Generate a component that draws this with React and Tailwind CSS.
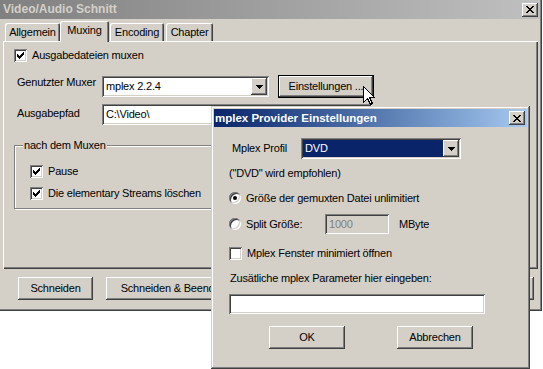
import React from "react";

const raised =
  "shadow-[inset_-1px_-1px_#404040,inset_1px_1px_#ffffff,inset_-2px_-2px_#808080,inset_2px_2px_#d4d0c8]";
const sunken =
  "shadow-[inset_1px_1px_#808080,inset_-1px_-1px_#ffffff,inset_2px_2px_#404040,inset_-2px_-2px_#d4d0c8]";

function CloseBtn() {
  return (
    <div className={`w-[16px] h-[14px] bg-[#d4d0c8] ${raised} flex items-center justify-center`}>
      <svg width="8" height="7" viewBox="0 0 8 7" shapeRendering="crispEdges">
        <path
          fill="#000"
          d="M0 0h2v1h-2z M6 0h2v1h-2z M1 1h2v1h-2z M5 1h2v1h-2z M2 2h4v1h-4z M3 3h2v1h-2z M2 4h4v1h-4z M1 5h2v1h-2z M5 5h2v1h-2z M0 6h2v1h-2z M6 6h2v1h-2z"
        />
      </svg>
    </div>
  );
}

function Arrow() {
  return (
    <svg width="7" height="4" viewBox="0 0 7 4" shapeRendering="crispEdges">
      <path fill="#000" d="M0 0h7v1h-7z M1 1h5v1h-5z M2 2h3v1h-3z M3 3h1v1h-1z" />
    </svg>
  );
}

function Check({ checked }) {
  return (
    <div className={`w-[13px] h-[13px] shrink-0 bg-white ${sunken}`}>
      {checked && (
        <svg width="13" height="13" viewBox="0 0 13 13" shapeRendering="crispEdges">
          <path
            fill="#000"
            d="M3 5h1v3h-1z M4 6h1v3h-1z M5 7h1v3h-1z M6 6h1v3h-1z M7 5h1v3h-1z M8 4h1v3h-1z M9 3h1v3h-1z"
          />
        </svg>
      )}
    </div>
  );
}

function Radio({ checked }) {
  return (
    <div
      className={`w-[12px] h-[12px] shrink-0 rounded-full bg-white ${sunken} flex items-center justify-center`}
    >
      {checked && <div className="w-[4px] h-[4px] rounded-full bg-black" />}
    </div>
  );
}

function Button({ children, className = "" }) {
  return (
    <div
      className={`h-[23px] bg-[#d4d0c8] ${raised} flex items-center justify-center shrink-0 ${className}`}
    >
      {children}
    </div>
  );
}

export default function App() {
  return (
    <div className="relative w-[543px] h-[369px] bg-white overflow-hidden font-['Liberation_Sans',Arial,sans-serif] text-[11px] leading-[13px] tracking-[-0.2px] text-black">
      {/* Main window */}
      <div className="w-[542px] h-[311px] bg-[#d4d0c8] pr-[2px] pb-[2px] shadow-[inset_-1px_-1px_#404040,inset_-2px_-2px_#808080] flex flex-col">
        {/* title */}
        <div className="h-[19px] w-[540px] bg-gradient-to-r from-[#808080] to-[#c0c0c0] flex items-center pl-[3px] pr-[2px]">
          <span className="font-bold text-[12px] tracking-normal text-[#d4d0c8] flex-1">Video/Audio Schnitt</span>
          <CloseBtn />
        </div>
        {/* tabs */}
        <div className="mt-[2px] h-[20px] flex items-start ml-[5px]">
          <div className="mt-[2px] h-[18px] w-[55px] rounded-t-[2px] shadow-[inset_1px_1px_#ffffff,inset_-1px_0_#404040,inset_-2px_0_#808080] flex items-center justify-center">
            Allgemein
          </div>
          <div className="relative z-10 h-[21px] w-[49px] bg-[#d4d0c8] rounded-t-[2px] shadow-[inset_1px_1px_#ffffff,inset_-1px_0_#404040,inset_-2px_0_#808080] flex items-start justify-center pt-[3px]">
            Muxing
          </div>
          <div className="ml-[1px] mt-[2px] h-[18px] w-[54px] rounded-t-[2px] shadow-[inset_1px_1px_#ffffff,inset_-1px_0_#404040,inset_-2px_0_#808080] flex items-center justify-center">
            Encoding
          </div>
          <div className="ml-[2px] mt-[2px] h-[18px] w-[47px] rounded-t-[2px] shadow-[inset_1px_1px_#ffffff,inset_-1px_0_#404040,inset_-2px_0_#808080] flex items-center justify-center">
            Chapter
          </div>
        </div>
        {/* panel */}
        <div className="ml-[3px] w-[535px] h-[228px] shrink-0 shadow-[inset_1px_1px_#ffffff,inset_-1px_-1px_#404040,inset_-2px_-2px_#808080] flex flex-col">
          <div className="mt-[8px] ml-[11px] flex items-center h-[13px]">
            <Check checked />
            <span className="ml-[5px]">Ausgabedateien muxen</span>
          </div>
          <div className="mt-[13px] ml-[14px] flex items-start h-[23px]">
            <span className="w-[85px] shrink-0 mt-[1px]">Genutzter Muxer</span>
            <div className={`mt-[1px] w-[167px] h-[21px] bg-white ${sunken} flex items-center pl-[4px] pr-[2px]`}>
              <span className="flex-1">mplex 2.2.4</span>
              <div className={`w-[16px] h-[17px] bg-[#d4d0c8] ${raised} flex items-center justify-center`}>
                <Arrow />
              </div>
            </div>
            <div className="ml-[9px] w-[96px] h-[23px] border border-black">
              <div className={`w-full h-full bg-[#d4d0c8] ${raised} flex items-center justify-center`}>
                Einstellungen ...
              </div>
            </div>
          </div>
          <div className="mt-[6px] ml-[14px] flex items-start h-[21px]">
            <span className="w-[85px] shrink-0 mt-[3px]">Ausgabepfad</span>
            <div className={`w-[270px] h-[21px] bg-white ${sunken} flex items-center pl-[4px]`}>
              C:\Video\
            </div>
          </div>
          <div className="relative mt-[20px] ml-[11px] w-[505px] h-[64px] border border-[#808080] shadow-[inset_1px_1px_#ffffff,1px_1px_#ffffff] pl-[15px] pt-[19px]">
            <span className="absolute left-[8px] -top-[7px] px-[1px] bg-[#d4d0c8]">nach dem Muxen</span>
            <div className="flex items-center h-[13px]">
              <Check checked />
              <span className="ml-[5px]">Pause</span>
            </div>
            <div className="mt-[9px] flex items-center h-[13px]">
              <Check checked />
              <span className="ml-[5px]">Die elementary Streams löschen</span>
            </div>
          </div>
        </div>
        {/* bottom buttons */}
        <div className="mt-[8px] flex items-center">
          <Button className="ml-[18px] w-[75px]">Schneiden</Button>
          <Button className="ml-[13px] w-[135px]">Schneiden &amp; Beenden</Button>
          <Button className="ml-auto mr-[6px] w-[75px]">Abbrechen</Button>
        </div>
      </div>

      {/* Dialog */}
      <div className="absolute left-[211px] top-[106px] w-[319px] h-[263px] bg-[#d4d0c8] p-[3px] shadow-[inset_-1px_-1px_#404040,inset_1px_1px_#d4d0c8,inset_-2px_-2px_#808080,inset_2px_2px_#ffffff] flex flex-col">
        <div className="h-[18px] shrink-0 bg-gradient-to-r from-[#0a246a] to-[#a6caf0] flex items-center pl-[1px] pr-[2px]">
          <span className="flex-1 font-bold text-[11.5px] tracking-normal text-white">mplex Provider Einstellungen</span>
          <CloseBtn />
        </div>
        <div className="mt-[11px] ml-[18px] flex items-center h-[21px]">
          <span className="w-[69px] shrink-0">Mplex Profil</span>
          <div className={`w-[160px] h-[21px] bg-white ${sunken} flex items-center p-[2px]`}>
            <div className="flex-1 h-full bg-[#0a246a] text-white flex items-center pl-[2px]">DVD</div>
            <div className={`w-[16px] h-[17px] bg-[#d4d0c8] ${raised} flex items-center justify-center`}>
              <Arrow />
            </div>
          </div>
        </div>
        <div className="mt-[8px] ml-[15px] h-[13px]">("DVD" wird empfohlen)</div>
        <div className="mt-[12px] ml-[15px] flex items-center h-[12px]">
          <Radio checked />
          <span className="ml-[5px]">Größe der gemuxten Datei unlimitiert</span>
        </div>
        <div className="mt-[10px] ml-[15px] flex items-center h-[20px]">
          <Radio />
          <span className="ml-[5px] w-[79px] shrink-0">Split Größe:</span>
          <div className={`w-[64px] h-[20px] bg-[#d4d0c8] ${sunken} flex items-center pl-[4px] text-[#808080]`}>
            1000
          </div>
          <span className="ml-[10px]">MByte</span>
        </div>
        <div className="mt-[13px] ml-[15px] flex items-center h-[13px]">
          <Check />
          <span className="ml-[5px]">Mplex Fenster minimiert öffnen</span>
        </div>
        <div className="mt-[12px] ml-[16px] h-[13px]">Zusätliche mplex Parameter hier eingeben:</div>
        <div className={`mt-[9px] ml-[15px] w-[256px] h-[20px] bg-white ${sunken}`} />
        <div className="mt-[12px] flex items-center">
          <Button className="ml-[55px] w-[76px]">OK</Button>
          <Button className="ml-[52px] w-[76px]">Abbrechen</Button>
        </div>
      </div>

      {/* mouse cursor */}
      <svg
        className="absolute left-[363px] top-[86px]"
        width="13"
        height="20"
        viewBox="0 0 13 20"
        shapeRendering="crispEdges"
      >
        <path
          d="M0.5 0.5 L0.5 16.5 L4.5 12.5 L7.5 18.5 L9.5 17.5 L6.5 11.5 L11.5 11.5 Z"
          fill="#fff"
          stroke="#000"
          strokeWidth="1"
          strokeLinejoin="miter"
        />
      </svg>
    </div>
  );
}
